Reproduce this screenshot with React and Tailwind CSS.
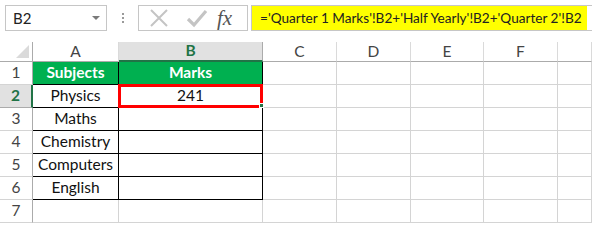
import React from "react";

const cols = ["A", "B", "C", "D", "E", "F", ""];
const subjects = ["Physics", "Maths", "Chemistry", "Computers", "English"];

const font = { fontFamily: "Lato, 'Open Sans', sans-serif" };

const Toolbar = () => (
  <div className="flex h-[42px] items-start pt-[5px] pl-[5px]">
    <div className="flex h-[26px] w-[102px] items-center justify-between border border-[#c6c6c6] pl-[7px] pr-[6px] text-[15px] text-[#222]">
      <span>B2</span>
      <span className="h-0 w-0 border-x-[4px] border-t-[4px] border-x-transparent border-t-[#7a7a7a]" />
    </div>
    <div className="flex h-[26px] w-[31px] flex-col items-center justify-center gap-[2px]">
      <span className="h-[2px] w-[2px] bg-[#9a9a9a]" />
      <span className="h-[2px] w-[2px] bg-[#9a9a9a]" />
      <span className="h-[2px] w-[2px] bg-[#9a9a9a]" />
    </div>
    <div className="flex h-[26px] w-[110px] items-center border border-[#c6c6c6]">
      <svg width="38" height="24" viewBox="0 0 38 24" className="ml-[1px]">
        <path d="M11 4 L27 20 M27 4 L11 20" stroke="#c4c4c4" strokeWidth="2" />
      </svg>
      <svg width="38" height="24" viewBox="0 0 38 24">
        <path d="M10 13 L16 19 L28 5" stroke="#c4c4c4" strokeWidth="3.2" fill="none" />
      </svg>
      <span className="ml-[1px] text-[21px] italic leading-none text-[#555]" style={{ fontFamily: "'Liberation Serif', serif" }}>
        fx
      </span>
    </div>
    <div className="ml-[3px] flex h-[26px] flex-1 items-center border border-[#c6c6c6] border-r-0">
      <div className="flex h-full w-[335px] items-center bg-[#ffff00] pl-[8px] text-[13.6px] text-[#222] whitespace-nowrap">
        ='Quarter 1 Marks'!B2+'Half Yearly'!B2+'Quarter 2'!B2
      </div>
    </div>
  </div>
);

const Cell = ({ className = "", children }) => (
  <div className={`flex items-center justify-center border-b border-r border-[#d4d4d4] text-[15.5px] ${className}`}>
    {children}
  </div>
);

export default function App() {
  const rows = [1, 2, 3, 4, 5, 6, 7];
  return (
    <div className="h-[225px] w-[592px] overflow-hidden bg-white" style={font}>
      <Toolbar />
      <div className="grid grid-cols-[33px_86px_144px_74px_74px_73px_74px_1fr] grid-rows-[20px_23px_23px_23px_23px_23px_23px_23px]">
        <div className="flex items-end justify-end border-b border-r border-[#ababab] pb-[3px] pr-[3px]">
          <svg width="13" height="13" viewBox="0 0 13 13">
            <path d="M13 0 L13 13 L0 13 Z" fill="#dadada" />
          </svg>
        </div>
        {cols.map((c) =>
          c === "B" ? (
            <div key={c} className="flex items-center justify-center border-b-2 border-r border-b-[#217346] border-r-[#ababab] bg-[#e1e1e1] text-[15.5px] font-bold text-[#217346]">
              B
            </div>
          ) : (
            <div key={c || "x"} className="flex items-center justify-center border-b border-r border-[#ababab] border-r-[#dadada] text-[15.5px] text-[#444]">
              {c}
            </div>
          )
        )}
        {rows.map((r) => (
          <React.Fragment key={r}>
            {r === 2 ? (
              <div className="flex items-center justify-center border-b border-r-2 border-b-[#ababab] border-r-[#217346] bg-[#e1e1e1] text-[15.5px] font-bold text-[#217346]">
                2
              </div>
            ) : (
              <div className="flex items-center justify-center border-b border-r border-[#d4d4d4] border-r-[#ababab] text-[15.5px] text-[#444]">
                {r}
              </div>
            )}
            {r === 1 ? (
              <>
                <Cell className="border-black bg-[#00b050] font-bold text-white">Subjects</Cell>
                <Cell className="border-black bg-[#00b050] font-bold text-white">Marks</Cell>
              </>
            ) : r <= 6 ? (
              <>
                <Cell className="border-black text-[#111]">{subjects[r - 2]}</Cell>
                {r === 2 ? (
                  <div className="relative -ml-[1px] -mt-[1px] flex items-center justify-center border-[3px] border-[#ff0000] text-[15.5px] text-[#111]">
                    241
                    <span className="absolute -bottom-[3px] -right-[4px] h-[5px] w-[5px] border border-white bg-[#217346]" />
                  </div>
                ) : (
                  <Cell className="border-black" />
                )}
              </>
            ) : (
              <>
                <Cell />
                <Cell />
              </>
            )}
            {[0, 1, 2, 3, 4].map((i) => (
              <Cell key={i} />
            ))}
          </React.Fragment>
        ))}
      </div>
    </div>
  );
}
